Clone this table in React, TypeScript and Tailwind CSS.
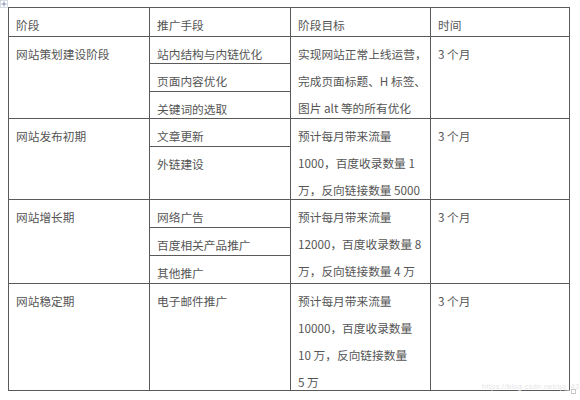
const cell = "pl-[7px] pt-[3px] leading-[27px] whitespace-nowrap";

type Group = {
  stage: string;
  means: { text: string; h: string }[];
  goal: string[];
  time: string;
  h: string;
};

const groups: Group[] = [
  {
    stage: "网站策划建设阶段",
    means: [
      { text: "站内结构与内链优化", h: "h-[26px]" },
      { text: "页面内容优化", h: "h-[28px]" },
      { text: "关键词的选取", h: "flex-1" },
    ],
    goal: ["实现网站正常上线运营，", "完成页面标题、H 标签、", "图片 alt 等的所有优化"],
    time: "3 个月",
    h: "h-[82px]",
  },
  {
    stage: "网站发布初期",
    means: [
      { text: "文章更新", h: "h-[27px]" },
      { text: "外链建设", h: "flex-1" },
    ],
    goal: ["预计每月带来流量", "1000，百度收录数量 1", "万，反向链接数量 5000"],
    time: "3 个月",
    h: "h-[81px]",
  },
  {
    stage: "网站增长期",
    means: [
      { text: "网络广告", h: "h-[27px]" },
      { text: "百度相关产品推广", h: "h-[28px]" },
      { text: "其他推广", h: "flex-1" },
    ],
    goal: ["预计每月带来流量", "12000，百度收录数量 8", "万，反向链接数量 4 万"],
    time: "3 个月",
    h: "h-[84px]",
  },
  {
    stage: "网站稳定期",
    means: [{ text: "电子邮件推广", h: "flex-1" }],
    goal: ["预计每月带来流量", "10000，百度收录数量", "10 万，反向链接数量", "5 万"],
    time: "3 个月",
    h: "h-[107px]",
  },
];

export default function App() {
  return (
    <div className="relative w-[580px] h-[400px] bg-white overflow-hidden font-['Noto_Sans_CJK_SC',sans-serif] text-[11.7px] text-[#555]">
      {/* table move handle */}
      <svg className="absolute left-0 top-0" width="8" height="8" viewBox="0 0 8 8">
        <rect x="0.5" y="0.5" width="7" height="7" fill="none" stroke="#b8c0d0" strokeWidth="0.6" />
        <path d="M4 1.5V6.5M1.5 4H6.5" stroke="#6a7a9a" strokeWidth="0.8" />
      </svg>

      <div className="pt-[7px] pl-[8px]">
        <div className="w-[562px] border border-[#5a5a5a]">
          <div className="flex h-[28px]">
            <div className={`w-[140px] ${cell}`}>阶段</div>
            <div className={`w-[141px] border-l border-[#5a5a5a] ${cell}`}>推广手段</div>
            <div className={`w-[140px] border-l border-[#5a5a5a] ${cell}`}>阶段目标</div>
            <div className={`flex-1 border-l border-[#5a5a5a] ${cell}`}>时间</div>
          </div>
          {groups.map((g) => (
            <div key={g.stage} className={`flex border-t border-[#5a5a5a] ${g.h}`}>
              <div className={`w-[140px] ${cell}`}>{g.stage}</div>
              <div className="w-[141px] border-l border-[#5a5a5a] flex flex-col">
                {g.means.map((m, i) => (
                  <div
                    key={m.text}
                    className={`${m.h} ${i > 0 ? "border-t border-[#5a5a5a]" : ""} ${cell}`}
                  >
                    {m.text}
                  </div>
                ))}
              </div>
              <div className={`w-[140px] border-l border-[#5a5a5a] ${cell}`}>
                {g.goal.map((l) => (
                  <div key={l}>{l}</div>
                ))}
              </div>
              <div className={`flex-1 border-l border-[#5a5a5a] ${cell}`}>{g.time}</div>
            </div>
          ))}
        </div>
      </div>

      {/* faint watermark */}
      <div className="absolute left-[482px] top-[383px] text-[7px] leading-[8px] text-[#e4e4e4] font-['Liberation_Sans',sans-serif] tracking-[0.5px]">
        https://blog.csdn.net/qq_43
      </div>
      <div className="absolute left-[571px] top-[389px] w-[5px] h-[5px] border border-[#c8c8c8]" />
    </div>
  );
}
